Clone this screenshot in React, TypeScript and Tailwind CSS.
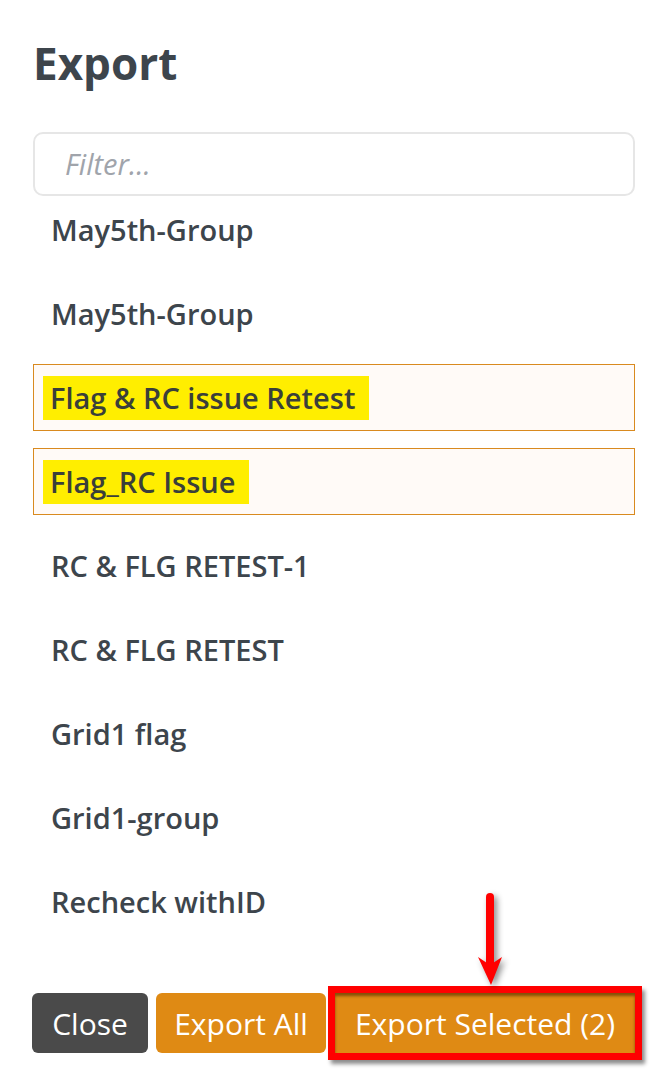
import React from 'react';

const groups = [
  { name: 'May5th-Group' },
  { name: 'May5th-Group' },
  { name: 'Flag & RC issue Retest', selected: true },
  { name: 'Flag_RC Issue', selected: true },
  { name: 'RC & FLG RETEST-1' },
  { name: 'RC & FLG RETEST' },
  { name: 'Grid1 flag' },
  { name: 'Grid1-group' },
  { name: 'Recheck withID' },
];

function GroupRow({ name, selected }: { name: string; selected?: boolean }) {
  if (selected) {
    return (
      <div className="h-[67px] flex items-center border-[1.5px] border-[#d98a1f] bg-[#fffaf7] pl-[9px]">
        <span className="bg-[#ffee00] h-[44px] flex items-center pl-[7px] pr-[14px] text-[29px] font-semibold text-[#3a3f3a]">
          {name}
        </span>
      </div>
    );
  }
  return (
    <div className="h-[67px] flex items-center pl-[18px] text-[29px] font-semibold text-[#3d454c]">
      {name}
    </div>
  );
}

export default function App() {
  return (
    <div className="relative w-[664px] h-[1082px] bg-white overflow-hidden font-['Open_Sans',sans-serif]">
      <div className="pl-[33px] pr-[29px]">
        <h1 className="pt-[41px] text-[44px] leading-[44px] font-bold text-[#3d454c]">Export</h1>

        <div className="mt-[47px] h-[64px] rounded-[10px] border-2 border-[#e6e6e6] flex items-center pl-[30px]">
          <span className="text-[29px] italic text-[#a0a4ab]">Filter...</span>
        </div>

        <div className="flex flex-col gap-[17px]">
          {groups.map((g, i) => (
            <GroupRow key={i} name={g.name} selected={g.selected} />
          ))}
        </div>

        <div className="mt-[51px] flex items-center">
          <button className="shrink-0 h-[60px] w-[116px] -ml-[1px] rounded-[6px] bg-[#4a4a4a] text-white text-[30px]">
            Close
          </button>
          <button className="shrink-0 ml-[8px] h-[60px] w-[170px] rounded-[6px] bg-[#df8a14] text-white text-[30px]">
            Export All
          </button>
          <div className="shrink-0 ml-[2px] border-[7px] border-[#ff0000] shadow-[3px_4px_4px_rgba(0,0,0,0.45)]">
            <button className="h-[60px] w-[300px] bg-[#df8a14] text-white text-[30px] shadow-[inset_0_3px_3px_rgba(70,40,0,0.6)]">
              Export Selected (2)
            </button>
          </div>
        </div>
      </div>

      <svg
        className="absolute left-[470px] top-[885px]"
        width="44"
        height="108"
        viewBox="0 0 44 108"
        style={{ filter: 'drop-shadow(3px 3px 3px rgba(0,0,0,0.45))' }}
      >
        <line x1="20" y1="12" x2="20" y2="78" stroke="#ff0000" strokeWidth="8" strokeLinecap="round" />
        <path d="M8 72 L20 80 L32 72 L21 100 Z" fill="#ff0000" />
      </svg>
    </div>
  );
}
